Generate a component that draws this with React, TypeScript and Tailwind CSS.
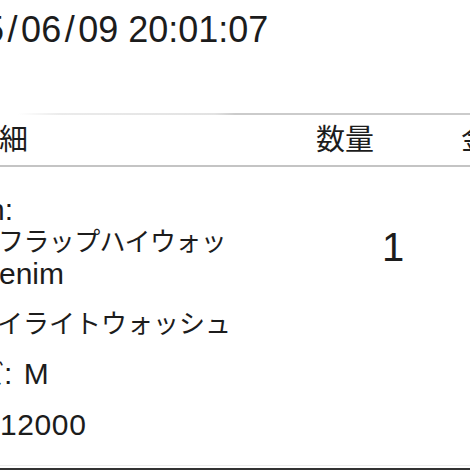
const latin = "font-['Liberation_Sans','Noto_Sans_CJK_JP',sans-serif]";

const Slash = () => <span className="mx-[3.5px]">/</span>;

export default function App() {
    return (
        <div className={`w-[470px] h-[470px] overflow-hidden bg-white text-[#1c1c1c] flex flex-col ${latin}`}>
            {/* order date */}
            <div className="pt-[12px] text-[36px] leading-none whitespace-nowrap -ml-[76px]">
                2025<Slash />06<Slash />09 20:01:07
            </div>

            <div className="mt-[65px] h-[2px] shrink-0 bg-[linear-gradient(to_right,#ffffff_18px,#ebebeb_60px,#e2e2e2_215px,#cbcbcb_235px)]" />

            {/* table header */}
            <div className="flex items-center h-[50px] shrink-0 text-[29px] leading-none whitespace-nowrap">
                <div className="w-[316px] shrink-0">
                    <span className="-ml-[30px] inline-block">明細</span>
                </div>
                <div className="w-[145px] shrink-0">数量</div>
                <div className="shrink-0">金額</div>
            </div>

            <div className="h-[2px] shrink-0 bg-[#c4c4c4]" />

            {/* item row */}
            <div className="flex flex-1 whitespace-nowrap">
                <div className="w-[382px] shrink-0 pt-[27px] text-[30px] leading-[32px]">
                    <div>
                        <div className="-ml-[12px]">n:</div>
                        <div className="-ml-[2px] text-[26px] tracking-[-0.6px]">フラップハイウォッ</div>
                        <div className="-ml-[1px]">enim</div>
                    </div>
                    <div className="mt-[18px] -ml-[3px] text-[26px]">イライトウォッシュ</div>
                    <div className="mt-[18px] -ml-[22px]">
                        <span className="text-[26px]">ズ</span>:<span className="ml-[3px]"> M</span>
                    </div>
                    <div className="mt-[18px] tracking-[0.6px]">12000</div>
                </div>
                <div className="pt-[60px] text-[40px] leading-none">1</div>
            </div>

            <div className="h-px shrink-0 bg-[#ececec]" />
            <div className="mt-[2px] h-[2px] shrink-0 bg-[#333333]" />
        </div>
    );
}
